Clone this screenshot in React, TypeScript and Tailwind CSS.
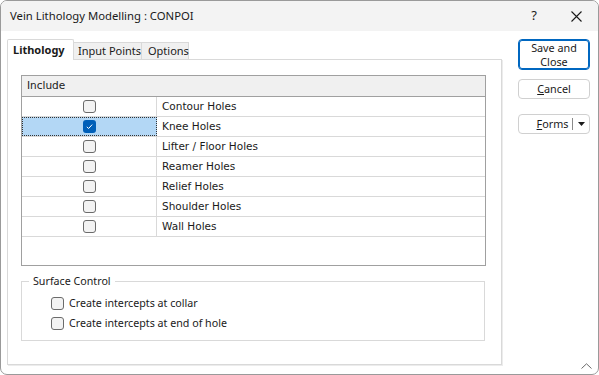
import React from 'react';

const rows = [
  { name: 'Contour Holes', checked: false },
  { name: 'Knee Holes', checked: true },
  { name: 'Lifter / Floor Holes', checked: false },
  { name: 'Reamer Holes', checked: false },
  { name: 'Relief Holes', checked: false },
  { name: 'Shoulder Holes', checked: false },
  { name: 'Wall Holes', checked: false },
];

const Check: React.FC<{ checked?: boolean }> = ({ checked }) =>
  checked ? (
    <span className="flex h-[13px] w-[13px] items-center justify-center rounded-[3px] bg-[#005fb8]">
      <svg width="9" height="9" viewBox="0 0 9 9" fill="none">
        <path d="M1.8 4.8 L3.6 6.5 L7.2 2.6" stroke="white" strokeWidth="1" />
      </svg>
    </span>
  ) : (
    <span className="block h-[13px] w-[13px] rounded-[3px] border border-[#6b6b6b] bg-[#f3f3f3]" />
  );

export default function App() {
  const ui = { fontFamily: '"Noto Sans", "Open Sans", sans-serif' };
  const grid = { fontFamily: '"DejaVu Sans", Verdana, sans-serif' };

  return (
    <div
      className="relative flex h-[375px] w-[599px] flex-col overflow-hidden rounded-[7px] border border-[#9a9a9a] bg-white text-[#1a1a1a]"
      style={ui}
    >
      {/* title bar */}
      <div className="flex h-[30px] shrink-0 items-center bg-[#f3f3f3] pl-[9px] text-[11.3px]">
        <span className="flex-1 whitespace-nowrap">Vein Lithology Modelling : CONPOI</span>
        <span className="w-[20px] text-center text-[13px]">?</span>
        <span className="ml-[22px] mr-[12px] flex w-[20px] justify-center">
          <svg width="11" height="11" viewBox="0 0 11 11">
            <path d="M0.5 0.5 L10.5 10.5 M10.5 0.5 L0.5 10.5" stroke="#1a1a1a" strokeWidth="1.1" />
          </svg>
        </span>
      </div>

      <div className="flex flex-1 pl-[6px] pt-[7px]">
        {/* left: tabs + panel */}
        <div className="flex w-[495px] flex-col">
          <div className="flex h-[21px] items-end whitespace-nowrap text-[11px]">
            <div className="relative z-10 -mb-px flex h-[21px] w-[67px] items-center rounded-t-[2px] border border-b-0 border-[#d9d9d9] bg-white pl-[5px] font-bold">
              Lithology
            </div>
            <div className="flex h-[17px] w-[68px] items-center border-t border-r border-[#d9d9d9] bg-[#f0f0f0] pl-[4px]">
              Input Points
            </div>
            <div className="flex h-[17px] w-[47px] items-center border-t border-r border-[#d9d9d9] bg-[#f0f0f0] pl-[6px]">
              Options
            </div>
          </div>

          <div className="flex h-[306px] flex-col border border-[#d9d9d9] pl-[13px] pt-[15px] shadow-[1px_1px_0_#ececec]">
            {/* grid */}
            <div className="flex h-[191px] w-[465px] flex-col border border-[#a0a0a0] text-[10.5px]" style={grid}>
              <div className="flex h-[21px] items-center border-b border-[#a0a0a0] bg-[#f0f0f0] pl-[5px]">
                Include
              </div>
              {rows.map((r) => (
                <div key={r.name} className="flex h-[20px] border-b border-[#d9d9d9]">
                  <div
                    className={
                      r.checked
                        ? 'flex w-[135px] items-center justify-center border border-dotted border-[#333] bg-[#b3d7f5]'
                        : 'flex w-[135px] items-center justify-center border-r border-[#d9d9d9]'
                    }
                  >
                    <Check checked={r.checked} />
                  </div>
                  <div className="flex items-center pl-[5px]">{r.name}</div>
                </div>
              ))}
            </div>

            {/* surface control */}
            <div className="relative mt-[15px] h-[60px] w-[464px] border border-[#d9d9d9] pl-[29px] pt-[11px] text-[10.7px]">
              <span className="absolute -top-[9px] left-[7px] bg-white px-[4px]">Surface Control</span>
              <div className="flex h-[20px] items-center gap-[5px]">
                <Check />
                <span>Create intercepts at collar</span>
              </div>
              <div className="flex h-[20px] items-center gap-[5px]">
                <Check />
                <span>Create intercepts at end of hole</span>
              </div>
            </div>
          </div>
        </div>

        {/* right: buttons */}
        <div className="ml-[16px] flex w-[72px] flex-col pt-px text-[10.8px]">
          <button className="flex h-[31px] flex-col items-center justify-center rounded-[4px] border border-[#0067c0] leading-[14px] shadow-[inset_0_0_0_1px_#0067c0]">
            <span className="block whitespace-nowrap leading-[14px]">Save and</span>
            <span className="block leading-[14px]">Close</span>
          </button>
          <button className="mt-[9px] flex h-[20px] items-center justify-center rounded-[4px] border border-[#d0d0d0]">
            <span>
              <span className="underline">C</span>ancel
            </span>
          </button>
          <button className="mt-[15px] flex h-[20px] items-center rounded-[4px] border border-[#d0d0d0]">
            <span className="flex-1 pl-[14px] text-center">
              <span className="underline">F</span>orms
            </span>
            <span className="h-[12px] w-px bg-[#8a8a8a]" />
            <span className="flex w-[16px] justify-center">
              <svg width="7" height="4" viewBox="0 0 7 4">
                <path d="M0 0 H7 L3.5 4 Z" fill="#1a1a1a" />
              </svg>
            </span>
          </button>
        </div>
      </div>

      <svg className="absolute bottom-[5px] right-[6px]" width="11" height="6" viewBox="0 0 11 6">
        <path d="M0.5 5.5 L5.5 0.8 L10.5 5.5" stroke="#6a6a6a" fill="none" strokeWidth="1" />
      </svg>
    </div>
  );
}
